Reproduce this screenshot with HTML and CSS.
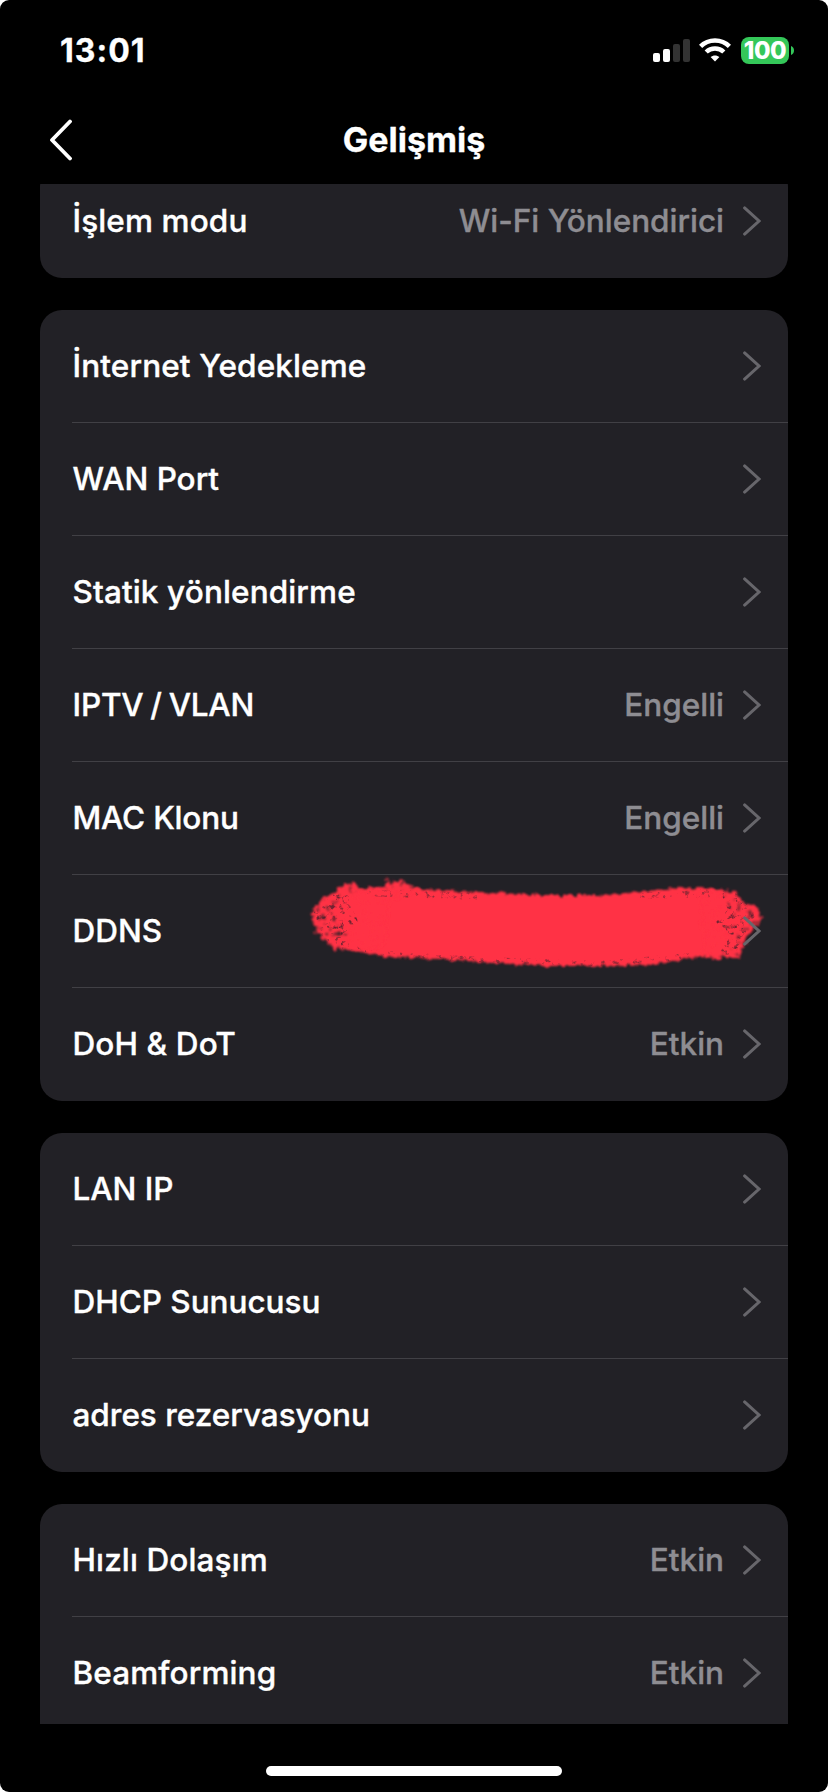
FILE: index.html
```
<!DOCTYPE html>
<html lang="tr">
<head>
<meta charset="utf-8">
<title>Gelişmiş</title>
<link rel="stylesheet" href="styles.css">
</head>
<body>
<svg class="defs" width="0" height="0" aria-hidden="true">
  <symbol id="chevron" viewBox="0 0 18 30">
    <path d="M1.6 1.9 16 15 1.6 28.1" fill="none" stroke="currentColor" stroke-width="3" stroke-linecap="round" stroke-linejoin="miter"/>
  </symbol>
</svg>
<div class="screen">
  <header class="status">
    <span class="clock">13:01</span>
    <div class="indicators">
      <svg class="signal" viewBox="0 0 37 23">
        <rect x="0" y="14" width="7" height="9" rx="2" fill="#fff"/>
        <rect x="10" y="10" width="7" height="13" rx="2" fill="#fff"/>
        <rect x="20" y="5" width="7" height="18" rx="2" fill="#333"/>
        <rect x="30" y="0" width="7" height="23" rx="2" fill="#333"/>
      </svg>
      <svg class="wifi" viewBox="0 0 32 24">
        <g fill="none" stroke="#fff" stroke-width="4.5">
          <path d="M1.6 8.4C9.4 .6 22.6 .6 30.4 8.4"/>
          <path d="M7.2 14C12 9.3 20 9.3 24.8 14"/>
        </g>
        <path d="M16 23.6 11.6 19.1C14 17 18 17 20.4 19.1Z" fill="#fff"/>
      </svg>
      <div class="battery"><span class="level">100</span></div>
      <svg class="tip" viewBox="0 0 3 9"><path d="M0 0C4 1.4 4 7.6 0 9Z" fill="#34c759"/></svg>
    </div>
  </header>

  <nav class="nav">
    <svg class="back" viewBox="0 0 24 42"><path d="M22 2.5 4 21 22 39.500" fill="none" stroke="#fff" stroke-width="3.8" stroke-linecap="round" stroke-linejoin="round"/></svg>
    <h1 class="title">Gelişmiş</h1>
  </nav>

  <main class="list">
    <section class="card card-top">
      <div class="row"><span class="label loose">İşlem modu</span><span class="value">Wi-Fi Yönlendirici</span><svg class="chev"><use href="#chevron"/></svg></div>
    </section>

    <section class="card">
      <div class="row"><span class="label loose">İnternet Yedekleme</span><svg class="chev"><use href="#chevron"/></svg></div>
      <div class="row"><span class="label">WAN Port</span><svg class="chev"><use href="#chevron"/></svg></div>
      <div class="row"><span class="label loose">Statik yönlendirme</span><svg class="chev"><use href="#chevron"/></svg></div>
      <div class="row"><span class="label caps slash">IPTV / VLAN</span><span class="value">Engelli</span><svg class="chev"><use href="#chevron"/></svg></div>
      <div class="row"><span class="label caps">MAC Klonu</span><span class="value">Engelli</span><svg class="chev"><use href="#chevron"/></svg></div>
      <div class="row">
        <span class="label">DDNS</span>
        <svg class="brush" viewBox="300 875 470 100">
          <defs>
            <filter id="rough" x="-5%" y="-15%" width="110%" height="130%">
              <feTurbulence type="fractalNoise" baseFrequency="0.22" numOctaves="3" seed="7" result="n"/>
              <feDisplacementMap in="SourceGraphic" in2="n" scale="7" xChannelSelector="R" yChannelSelector="G" result="d"/>
              <feGaussianBlur in="d" stdDeviation=".8"/>
            </filter>
            <filter id="speckle" x="-5%" y="-15%" width="110%" height="130%">
              <feTurbulence type="fractalNoise" baseFrequency="0.19" numOctaves="4" seed="4" result="n"/>
              <feColorMatrix values="0 0 0 0 0  0 0 0 0 0  0 0 0 0 0  5 0 0 0 -1" result="holes"/>
              <feDisplacementMap in="SourceGraphic" in2="n" scale="10" xChannelSelector="G" yChannelSelector="B" result="d"/>
              <feComposite in="d" in2="holes" operator="in" result="s"/>
              <feGaussianBlur in="s" stdDeviation=".8"/>
            </filter>
            <filter id="flecks" x="-5%" y="-15%" width="110%" height="130%">
              <feTurbulence type="fractalNoise" baseFrequency="0.2" numOctaves="3" seed="11"/>
              <feColorMatrix values="0 0 0 0 0  0 0 0 0 0  0 0 0 0 0  5 0 0 0 -2.9" result="dots"/>
              <feComposite in="SourceGraphic" in2="dots" operator="in"/>
            </filter>
          </defs>
          <path filter="url(#rough)" fill="#ff3344" d="M352 892 368 888 386 888 420 889 480 892 540 895 600 895 640 892 665 889 700 888 722 890 726 903 735 915 729 926 731 939 722 955 690 958 655 964 600 966 540 966 480 962 440 959 385 957 358 951 343 943 346 933 335 922 342 912 338 903Z"/>
          <g filter="url(#speckle)" fill="#ff3344">
            <path d="M311 915 318 902 331 894 348 883 354 884 360 889 383 889 387 880 405 883 421 890 390 900 385 945 361 951 337 949 325 940 316 932Z"/>
            <path d="M700 889 736 891 741 900 755 906 761 912 760 921 753 929 746 938 745 947 738 958 705 958Z"/>
          </g>
          <g filter="url(#flecks)" fill="#37202a">
            <path opacity=".7" d="M314 912 332 895 350 889 350 905 358 921 343 936 362 950 338 949 322 935Z"/>
            <path opacity=".7" d="M720 891 735 893 757 912 743 937 735 954 718 955 731 936 716 922 728 910Z"/>
            <path opacity=".5" d="M360 889 480 893 480 900 365 896ZM365 950 480 957 600 961 690 953 690 960 600 966 480 963 365 957ZM640 893 712 889 712 897 640 899Z"/>
          </g>
        </svg>
        <svg class="chev chev-front"><use href="#chevron"/></svg>
      </div>
      <div class="row"><span class="label loose">DoH &amp; DoT</span><span class="value">Etkin</span><svg class="chev"><use href="#chevron"/></svg></div>
    </section>

    <section class="card">
      <div class="row"><span class="label">LAN IP</span><svg class="chev"><use href="#chevron"/></svg></div>
      <div class="row"><span class="label">DHCP Sunucusu</span><svg class="chev"><use href="#chevron"/></svg></div>
      <div class="row"><span class="label">adres rezervasyonu</span><svg class="chev"><use href="#chevron"/></svg></div>
    </section>

    <section class="card card-cut">
      <div class="row"><span class="label loose">Hızlı Dolaşım</span><span class="value">Etkin</span><svg class="chev"><use href="#chevron"/></svg></div>
      <div class="row"><span class="label loose">Beamforming</span><span class="value">Etkin</span><svg class="chev"><use href="#chevron"/></svg></div>
    </section>
  </main>

  <footer class="home"><div class="pill"></div></footer>
</div>
</body>
</html>
```
FILE: styles.css
```
* { box-sizing: border-box; }
html { background: #fff; }
body { margin: 0; font-family: Inter, "Noto Sans", sans-serif; color: #fff; }
.defs { position: absolute; }
.screen {
  width: 828px;
  height: 1792px;
  background: #000;
  border-radius: 9px;
  overflow: hidden;
  display: flex;
  flex-direction: column;
}

.status {
  flex: none;
  height: 100px;
  padding: 0 34px 0 60px;
  display: flex;
  align-items: center;
  justify-content: space-between;
}
.clock { font-size: 32px; font-weight: 700; line-height: 40px; letter-spacing: 1px; padding-top: 1px; -webkit-text-stroke: 0.3px; }
.indicators { display: flex; align-items: center; }
.signal { width: 37px; height: 23px; margin-right: 9px; }
.wifi { width: 32px; height: 24px; margin-right: 10px; }
.battery {
  width: 48px;
  height: 27px;
  border-radius: 8px;
  background: #34c759;
  display: flex;
  align-items: center;
  justify-content: center;
}
.level { font-size: 24px; font-weight: 800; line-height: 27px; letter-spacing: -0.4px; }
.tip { width: 3px; height: 9px; margin-left: 2px; }

.nav {
  flex: none;
  height: 84px;
  padding: 0 48px;
  display: grid;
  grid-template-columns: 24px 1fr 24px;
  align-items: start;
}
.back { width: 24px; height: 42px; margin-top: 19px; }
.title {
  margin: 19px 0 0;
  font-size: 34px;
  font-weight: 700;
  line-height: 42px;
  text-align: center;
  -webkit-text-stroke: 0.3px;
}

.list {
  flex: none;
  height: 1540px;
  padding: 0 40px;
  overflow: hidden;
  display: flex;
  flex-direction: column;
  gap: 32px;
}
.card { flex: none; background: #222126; border-radius: 22px; }
.card-top { margin-top: -19px; }
.card-cut { border-radius: 22px 22px 0 0; }
.row {
  position: relative;
  height: 113px;
  margin-left: 32px;
  padding-right: 27px;
  border-bottom: 1px solid #414045;
  display: flex;
  align-items: center;
}
.row:last-child { border-bottom-color: transparent; }
.label, .value {
  font-size: 31.5px;
  font-weight: 500;
  line-height: 40px;
  white-space: nowrap;
  letter-spacing: -0.02px;
  -webkit-text-stroke: 0.35px;
}
.label { padding-left: 0.5px; }
.value { margin-left: auto; color: #8e8d92; }
.loose { letter-spacing: 0.12px; }
.caps { letter-spacing: -0.2px; }
.slash { word-spacing: -1.3px; }
.chev { flex: none; width: 18px; height: 30px; margin-left: 19px; color: #67666b; }
.label + .chev, .brush + .chev { margin-left: auto; }
.chev-front { position: relative; }
.brush { position: absolute; left: 228px; top: 0; width: 470px; height: 100px; }

.home { flex: 1; display: flex; justify-content: center; align-items: flex-end; padding-bottom: 16px; }
.pill { width: 296px; height: 10px; border-radius: 5px; background: #fff; }
```
